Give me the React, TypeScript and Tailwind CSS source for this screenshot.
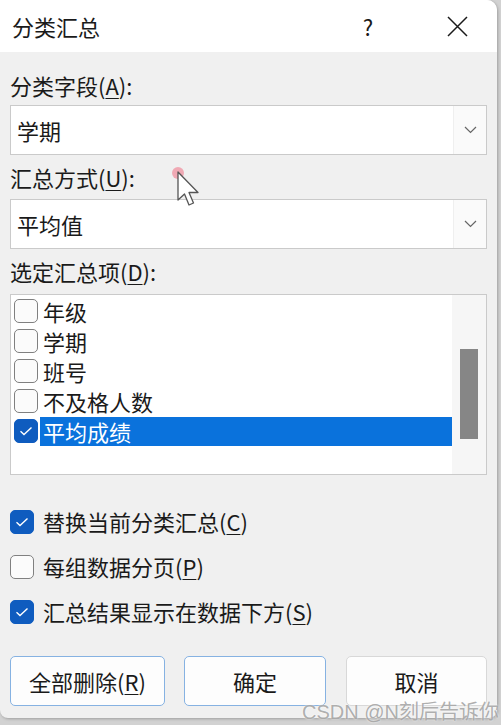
import React from 'react'

const font = "font-['Microsoft_YaHei_UI','Noto_Sans_CJK_SC',sans-serif]"

const Key = ({ k }: { k: string }) => <span className="underline underline-offset-[3px] decoration-1">{k}</span>

const Check = ({ on }: { on?: boolean }) => (
    <div
        className={`flex items-center justify-center rounded-[5px] w-[24px] h-[24px] ${on ? 'bg-[#0f5cbf] border border-[#0f5cbf]' : 'bg-[#fbfbfb] border-[1.5px] border-[#808080]'}`}
    >
        {on && (
            <svg width="14" height="10" viewBox="0 0 14 10">
                <path d="M1.5 5.2 L5 8.5 L12.5 1.5" fill="none" stroke="white" strokeWidth="1.4" />
            </svg>
        )}
    </div>
)

const Combo = ({ value }: { value: string }) => (
    <div className="flex h-[50px] bg-white border border-[#cacaca]">
        <div className="flex-1 flex items-center pl-[6px] text-[22px] text-[#1a1a1a]">{value}</div>
        <div className="w-[33px] flex items-center justify-center bg-[#fafafa] border-l border-[#efefef]">
            <svg width="13" height="8" viewBox="0 0 13 8">
                <path d="M1 1 L6.5 6.5 L12 1" fill="none" stroke="#666" strokeWidth="1.2" />
            </svg>
        </div>
    </div>
)

const items = ['年级', '学期', '班号', '不及格人数', '平均成绩']

const App = () => {
    return (
        <div className={`w-[501px] h-[725px] bg-[#d2d2d2] ${font} relative overflow-hidden`}>
            <div className="w-[497px] h-[718px] bg-[#f0f0f0] rounded-tr-[10px] rounded-b-[8px] overflow-hidden flex flex-col shadow-[1px_1px_3px_rgba(0,0,0,0.25)]">
                {/* title bar */}
                <div className="h-[52px] bg-white flex items-center pl-[12px] shrink-0">
                    <span className="text-[22px] text-[#1a1a1a] flex-1">分类汇总</span>
                    <span className="text-[22px] text-[#1a1a1a] w-[20px] mr-[69px] text-center">?</span>
                    <svg width="21" height="21" viewBox="0 0 21 21" className="mr-[29px]">
                        <path d="M1 1 L20 20 M20 1 L1 20" stroke="#1a1a1a" strokeWidth="1.5" />
                    </svg>
                </div>

                <div className="px-[10px] flex flex-col text-[#1a1a1a]">
                    <div className="h-[30px] leading-[30px] text-[22px] mt-[18px]">分类字段(<Key k="A" />):</div>
                    <div className="mt-[5px]"><Combo value="学期" /></div>

                    <div className="h-[30px] leading-[30px] text-[22px] mt-[7px]">汇总方式(<Key k="U" />):</div>
                    <div className="mt-[7px]"><Combo value="平均值" /></div>

                    <div className="h-[30px] leading-[30px] text-[22px] mt-[7px]">选定汇总项(<Key k="D" />):</div>
                    <div className="mt-[8px] h-[181px] bg-white border border-[#cacaca] flex">
                        <div className="flex-1 pt-[1px] pl-[3px] flex flex-col">
                            {items.map((it, i) => {
                                const sel = i === items.length - 1
                                return (
                                    <div key={it} className="h-[30px] flex items-center">
                                        <Check on={sel} />
                                        <div className={`ml-[2px] flex-1 h-[29px] flex items-center pl-[3px] text-[22px] ${sel ? 'bg-[#0a72dc] text-white' : ''}`}>
                                            {it}
                                        </div>
                                    </div>
                                )
                            })}
                        </div>
                        <div className="w-[34px] bg-[#f6f6f6] pt-[54px] flex justify-center">
                            <div className="w-[18px] h-[90px] bg-[#868686]" />
                        </div>
                    </div>

                    <div className="mt-[24px] flex flex-col">
                        <div className="h-[45px] flex items-center gap-[9px] text-[22px]">
                            <Check on />
                            <span>替换当前分类汇总(<Key k="C" />)</span>
                        </div>
                        <div className="h-[45px] flex items-center gap-[9px] text-[22px]">
                            <Check />
                            <span>每组数据分页(<Key k="P" />)</span>
                        </div>
                        <div className="h-[45px] flex items-center gap-[9px] text-[22px]">
                            <Check on />
                            <span>汇总结果显示在数据下方(<Key k="S" />)</span>
                        </div>
                    </div>

                    <div className="mt-[22px] flex">
                        <button className="w-[155px] h-[50px] rounded-[5px] border border-[#86b2e2] bg-[#fdfdfd] text-[22px] text-[#1a1a1a]">
                            全部删除(<Key k="R" />)
                        </button>
                        <button className="ml-[19px] w-[142px] h-[50px] rounded-[5px] border border-[#86b2e2] bg-[#fdfdfd] text-[22px] text-[#1a1a1a]">
                            确定
                        </button>
                        <button className="ml-[20px] w-[141px] h-[50px] rounded-[5px] border border-[#d8d8d8] bg-[#fdfdfd] text-[22px] text-[#1a1a1a]">
                            取消
                        </button>
                    </div>
                </div>
            </div>

            {/* mouse pointer */}
            <div className="absolute left-[172px] top-[167px] w-[12px] h-[12px] rounded-full bg-[#f08a9a]/70" />
            <svg className="absolute left-[176px] top-[170px]" width="26" height="40" viewBox="0 0 26 40">
                <path d="M2 2 L2 30 L8.5 24 L13 35 L17.5 33 L13 22.5 L22 22.5 Z" fill="white" stroke="#555" strokeWidth="1.3" strokeLinejoin="round" />
            </svg>

            {/* watermark */}
            <div className="absolute left-[302px] top-[699px] text-[20px] leading-[26px] text-[#9a9a9a]/80 [text-shadow:0_0_2px_white] font-['Liberation_Sans','Noto_Sans_CJK_SC',sans-serif]">
                CSDN @N刻后告诉你
            </div>
        </div>
    )
}

export default App
